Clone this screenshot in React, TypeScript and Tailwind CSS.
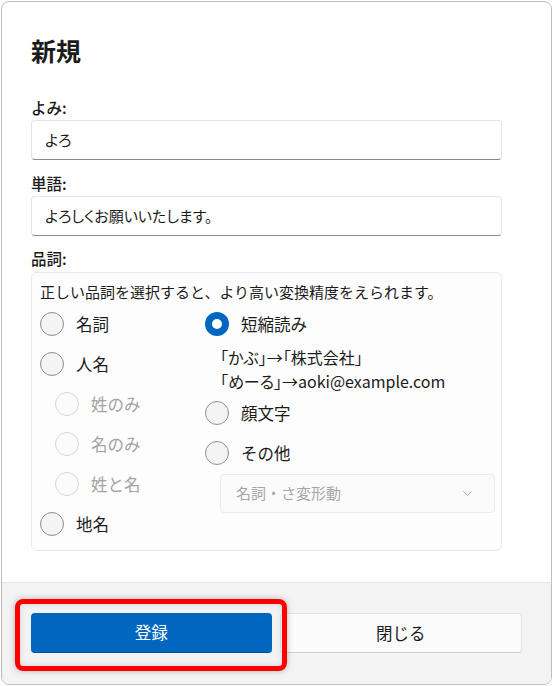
import React from "react";
import { ChevronDown } from "lucide-react";

type RadioProps = { label: string; state?: "off" | "on" | "disabled"; indent?: boolean };

function Radio({ label, state = "off", indent = false }: RadioProps) {
  return (
    <div className={"flex h-[40px] items-center gap-3 " + (indent ? "pl-[15px]" : "")}>
      {state === "on" ? (
        <span className="flex h-[24px] w-[24px] shrink-0 items-center justify-center rounded-full bg-[#0067c0]">
          <span className="h-[10px] w-[10px] rounded-full bg-white" />
        </span>
      ) : state === "disabled" ? (
        <span className="h-[24px] w-[24px] shrink-0 rounded-full border border-[#d6d6d6] bg-[#fbfbfb]" />
      ) : (
        <span className="h-[24px] w-[24px] shrink-0 rounded-full border border-[#8f8f8f] bg-[#f4f4f4]" />
      )}
      <span
        className={
          "text-[16.5px] leading-[24px] " + (state === "disabled" ? "text-[#a3a3a3]" : "text-[#1b1b1b]")
        }
      >
        {label}
      </span>
    </div>
  );
}

export default function App() {
  return (
    <div className="relative h-[686px] w-[552px] overflow-hidden bg-white pl-[1px] pt-[1px] font-['Noto_Sans_CJK_JP',sans-serif] text-[#1b1b1b]">
      <div className="flex h-[684px] w-[551px] flex-col overflow-hidden rounded-[8px] border border-[#bdbdbd] bg-white">
        <div className="flex flex-1 flex-col pl-[29px]">
          <div className="mt-[30px] text-[25px] font-semibold leading-[36px]">新規</div>

          <div className="mt-[29px] text-[15.5px] font-medium leading-[20px]">よみ:</div>
          <div className="mt-[3px] flex h-[40px] w-[471px] items-center rounded-[4px] border border-[#e5e5e5] border-b-[#8a8a8a] bg-white pl-[13px] text-[15px] [font-feature-settings:'palt']">
            よろ
          </div>

          <div className="mt-[13px] text-[15.5px] font-medium leading-[20px]">単語:</div>
          <div className="mt-[3px] flex h-[40px] w-[471px] items-center rounded-[4px] border border-[#e5e5e5] border-b-[#8a8a8a] bg-white pl-[13px] text-[15px] [font-feature-settings:'palt']">
            よろしくお願いいたします。
          </div>

          <div className="mt-[12px] text-[15.5px] font-medium leading-[20px]">品詞:</div>
          <div className="mt-[4px] w-[471px] rounded-[6px] border border-[#e8e8e8] bg-[#fdfdfd] pb-[6px] pl-[8px] pr-[6px] pt-[9px]">
            <div className="text-[15px] leading-[20px]">
              正しい品詞を選択すると、より高い変換精度をえられます。
            </div>
            <div className="mt-[2px] flex">
              <div className="flex w-[165px] flex-col">
                <Radio label="名詞" />
                <Radio label="人名" />
                <Radio label="姓のみ" state="disabled" indent />
                <Radio label="名のみ" state="disabled" indent />
                <Radio label="姓と名" state="disabled" indent />
                <Radio label="地名" />
              </div>
              <div className="flex flex-1 flex-col">
                <Radio label="短縮読み" state="on" />
                <div className="pl-[15px] pt-[1px] text-[16px] leading-[24px] [font-feature-settings:'palt']">
                  <div>「かぶ」→「株式会社」</div>
                  <div>「めーる」→aoki@example.com</div>
                </div>
                <Radio label="顔文字" />
                <Radio label="その他" />
                <div className="ml-[15px] mt-[1px] flex h-[39px] w-[275px] items-center justify-between rounded-[4px] border border-[#ececec] bg-[#fbfbfb] pl-[15px] pr-[19px]">
                  <span className="text-[15px] text-[#a6a6a6]">名詞・さ変形動</span>
                  <ChevronDown size={15} strokeWidth={1.4} color="#9a9a9a" />
                </div>
              </div>
            </div>
          </div>
        </div>

        <div className="flex h-[102px] gap-2 border-t border-[#e5e5e5] bg-[#f3f3f3] px-[29px] pt-[30px]">
          <div className="flex h-[40px] flex-1 items-center justify-center rounded-[4px] border-b border-[#00529c] bg-[#0067c0] text-[16.5px] text-white">
            登録
          </div>
          <div className="flex h-[40px] flex-1 items-center justify-center rounded-[4px] border border-[#e3e3e3] border-b-[#d0d0d0] bg-[#fbfbfb] text-[16.5px]">
            閉じる
          </div>
        </div>
      </div>

      <div className="absolute left-[15px] top-[599px] h-[72px] w-[272px] rounded-[8px] border-[5px] border-[#ff0000] shadow-[0_0_6px_rgba(0,0,0,0.25),inset_0_0_6px_rgba(0,0,0,0.12)]" />
    </div>
  );
}
